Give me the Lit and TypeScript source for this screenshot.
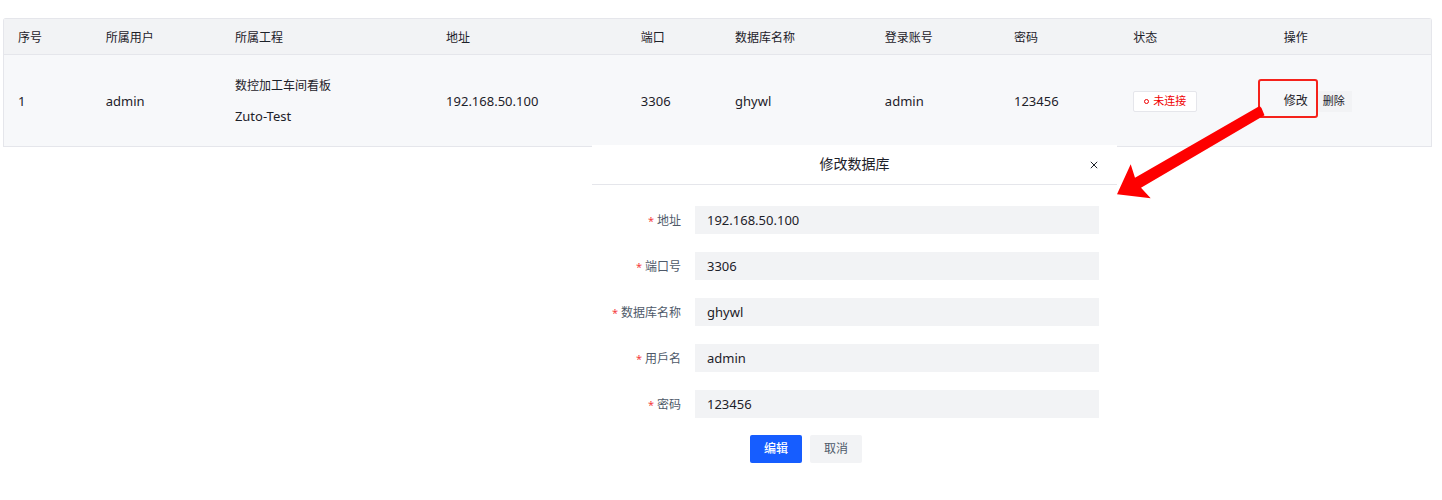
import { LitElement, html, css, svg } from "lit";
import { customElement, state } from "lit/decorators.js";

interface Column {
  key: string;
  title: string;
}

interface Field {
  id: string;
  label: string;
  value: string;
}

const COLUMNS: Column[] = [
  { key: "index", title: "序号" },
  { key: "user", title: "所属用户" },
  { key: "project", title: "所属工程" },
  { key: "address", title: "地址" },
  { key: "port", title: "端口" },
  { key: "database", title: "数据库名称" },
  { key: "account", title: "登录账号" },
  { key: "password", title: "密码" },
  { key: "status", title: "状态" },
  { key: "actions", title: "操作" },
];

const baseText = css`
  :host {
    font-family: "Noto Sans", "Noto Sans CJK SC", sans-serif;
    font-size: 12px;
    line-height: 20px;
    color: #1d2129;
  }
  button,
  input {
    font: inherit;
    color: inherit;
    margin: 0;
    border: 0;
    border-radius: 0;
    box-sizing: border-box;
  }
  button {
    cursor: pointer;
    white-space: nowrap;
  }
  .latin {
    font-size: 13px;
  }
`;

@customElement("database-dialog")
export class DatabaseDialog extends LitElement {
  static styles = [
    baseText,
    css`
      :host {
        display: block;
        background: #fff;
      }
      .header {
        display: flex;
        align-items: center;
        height: 39px;
        padding: 0 17px;
        border-bottom: 1px solid #e5e6eb;
      }
      .title {
        flex: 1;
        margin: 0;
        padding: 0 0 2px 12px;
        text-align: center;
        font-size: 14px;
        font-weight: 400;
      }
      .close {
        display: flex;
        padding: 2px;
        background: none;
      }
      .form {
        display: grid;
        grid-template-columns: 89px 1fr;
        align-items: center;
        gap: 18px 14px;
        padding: 21px 18px 36px 0;
      }
      .label {
        padding-top: 1px;
        text-align: right;
        color: #4e5969;
      }
      .required {
        margin-right: 3px;
        color: #f53f3f;
        font-size: 11px;
      }
      .input {
        width: 100%;
        height: 28px;
        padding: 0 12px;
        background: #f2f3f5;
        font-size: 13px;
        outline: none;
      }
      .footer {
        grid-column: 1 / -1;
        display: flex;
        gap: 8px;
        margin-top: -1px;
        padding-left: 158px;
      }
      .button {
        height: 28px;
        padding: 0 14px;
        border-radius: 2px;
        background: #f2f3f5;
        color: #4e5969;
      }
      .primary {
        background: #165dff;
        color: #fff;
        font-weight: 500;
      }
    `,
  ];

  @state() private fields: Field[] = [
    { id: "address", label: "地址", value: "192.168.50.100" },
    { id: "port", label: "端口号", value: "3306" },
    { id: "database", label: "数据库名称", value: "ghywl" },
    { id: "username", label: "用戶名", value: "admin" },
    { id: "password", label: "密码", value: "123456" },
  ];

  render() {
    return html`
      <header class="header">
        <h2 class="title">修改数据库</h2>
        <button class="close" type="button" aria-label="关闭">
          <svg width="8" height="8" viewBox="0 0 8 8" fill="none" stroke="#1d2129" stroke-width="1">
            <path d="M0.8 0.8 7.2 7.2M7.2 0.8 0.8 7.2" />
          </svg>
        </button>
      </header>
      <form class="form" @submit=${(e: Event) => e.preventDefault()}>
        ${this.fields.map(
          (f) => html`
            <label class="label" for=${f.id}><span class="required">*</span>${f.label}</label>
            <input class="input" id=${f.id} type="text" .value=${f.value} />
          `
        )}
        <div class="footer">
          <button class="button primary" type="submit">编辑</button>
          <button class="button" type="button">取消</button>
        </div>
      </form>
    `;
  }
}

@customElement("app-root")
export class AppRoot extends LitElement {
  static styles = [
    baseText,
    css`
      :host {
        display: block;
        padding: 18px 10px 0 3px;
        background: #fff;
      }
      .table {
        width: 100%;
        table-layout: fixed;
        border-collapse: separate;
        border-spacing: 0;
        border: solid #e5e6eb;
        border-width: 1px 1px 0 1px;
        border-radius: 3px 3px 0 0;
      }
      .col-index { width: 6.15%; }
      .col-user { width: 9.05%; }
      .col-project { width: 14.8%; }
      .col-address { width: 13.65%; }
      .col-port { width: 6.6%; }
      .col-database { width: 10.5%; }
      .col-account { width: 9.05%; }
      .col-password { width: 8.35%; }
      .col-status { width: 10.55%; }
      .head,
      .cell {
        text-align: left;
        font-weight: 400;
        border-bottom: 1px solid #e5e6eb;
        white-space: nowrap;
      }
      .head {
        padding: 9px 13px 6px 14px;
        background: #f2f3f5;
      }
      .cell {
        padding: 15px 13px 14px 14px;
        background: #f7f8fa;
      }
      .line {
        display: block;
        line-height: 31px;
      }
      .tag {
        display: inline-flex;
        align-items: center;
        gap: 4px;
        height: 21px;
        padding: 0 10px;
        box-sizing: border-box;
        border: 1px solid #e5e6eb;
        border-radius: 2px;
        background: #fff;
        color: #f00000;
        font-size: 11px;
        vertical-align: middle;
      }
      .ring {
        width: 3px;
        height: 3px;
        border: 1px solid #f00000;
        border-radius: 50%;
      }
      .actions {
        position: relative;
        display: flex;
        gap: 8px;
        height: 21px;
      }
      .edit {
        padding: 0;
        background: none;
      }
      .delete {
        padding: 0 7px;
        background: #f2f3f5;
        font-size: 11px;
      }
      .highlight {
        position: absolute;
        z-index: 2;
        top: -12px;
        left: -26px;
        width: 60px;
        height: 39px;
        box-sizing: border-box;
        border: 2px solid #f5221b;
        border-radius: 3px;
        pointer-events: none;
      }
      .arrow {
        position: absolute;
        z-index: 3;
        top: 9px;
        left: -168px;
        pointer-events: none;
      }
      .dialog {
        position: relative;
        z-index: 1;
        width: 525px;
        margin: -2px 315px 0 auto;
      }
    `,
  ];

  private arrow() {
    return svg`<polygon fill="#fe0000"
      points="1,94.3 14.7,64.3 19,77.7 143.6,6 145.5,8 148.5,15.3 25,87.7 34.7,98.3" />`;
  }

  render() {
    return html`
      <table class="table">
        <colgroup>
          ${COLUMNS.map((c) => html`<col class="col-${c.key}" />`)}
        </colgroup>
        <thead>
          <tr>
            ${COLUMNS.map((c) => html`<th class="head" scope="col">${c.title}</th>`)}
          </tr>
        </thead>
        <tbody>
          <tr>
            <td class="cell latin">1</td>
            <td class="cell latin">admin</td>
            <td class="cell">
              <span class="line">数控加工车间看板</span>
              <span class="line latin">Zuto-Test</span>
            </td>
            <td class="cell latin">192.168.50.100</td>
            <td class="cell latin">3306</td>
            <td class="cell latin">ghywl</td>
            <td class="cell latin">admin</td>
            <td class="cell latin">123456</td>
            <td class="cell"><span class="tag"><i class="ring"></i>未连接</span></td>
            <td class="cell">
              <div class="actions">
                <button class="edit" type="button">修改</button>
                <button class="delete" type="button">删除</button>
                <span class="highlight"></span>
                <svg class="arrow" width="150" height="100" viewBox="0 0 150 100">${this.arrow()}</svg>
              </div>
            </td>
          </tr>
        </tbody>
      </table>
      <database-dialog class="dialog" role="dialog" aria-label="修改数据库"></database-dialog>
    `;
  }
}
